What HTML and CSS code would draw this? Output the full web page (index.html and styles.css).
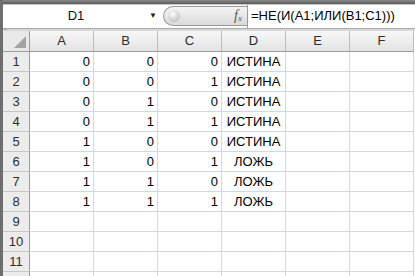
FILE: index.html
```html
<!DOCTYPE html>
<html>
  <head>
    <meta charset="UTF-8">
    <title>Excel</title>
    <link rel="stylesheet" href="styles.css">
  </head>
  <body>
    <div class="window">
      <div class="topstrip"></div>

      <div class="formulabar">
        <div class="namebox">D1</div>
        <div class="dropdown">&#9660;</div>
        <div class="pill">
          <span class="knob"></span>
          <span class="fx">f<sub>x</sub></span>
        </div>
        <div class="formula">=НЕ(И(А1;ИЛИ(В1;С1)))</div>
      </div>

      <div class="divider"><span class="mark"></span></div>

      <div class="sheet">
        <div class="corner"><span class="tri"></span></div>
        <div class="colhead">A</div>
        <div class="colhead">B</div>
        <div class="colhead">C</div>
        <div class="colhead">D</div>
        <div class="colhead">E</div>
        <div class="colhead">F</div>

        <div class="rowhead">1</div><div class="cell num">0</div><div class="cell num">0</div><div class="cell num">0</div><div class="cell bool">ИСТИНА</div><div class="cell"></div><div class="cell"></div>
        <div class="rowhead">2</div><div class="cell num">0</div><div class="cell num">0</div><div class="cell num">1</div><div class="cell bool">ИСТИНА</div><div class="cell"></div><div class="cell"></div>
        <div class="rowhead">3</div><div class="cell num">0</div><div class="cell num">1</div><div class="cell num">0</div><div class="cell bool">ИСТИНА</div><div class="cell"></div><div class="cell"></div>
        <div class="rowhead">4</div><div class="cell num">0</div><div class="cell num">1</div><div class="cell num">1</div><div class="cell bool">ИСТИНА</div><div class="cell"></div><div class="cell"></div>
        <div class="rowhead">5</div><div class="cell num">1</div><div class="cell num">0</div><div class="cell num">0</div><div class="cell bool">ИСТИНА</div><div class="cell"></div><div class="cell"></div>
        <div class="rowhead">6</div><div class="cell num">1</div><div class="cell num">0</div><div class="cell num">1</div><div class="cell bool">ЛОЖЬ</div><div class="cell"></div><div class="cell"></div>
        <div class="rowhead">7</div><div class="cell num">1</div><div class="cell num">1</div><div class="cell num">0</div><div class="cell bool">ЛОЖЬ</div><div class="cell"></div><div class="cell"></div>
        <div class="rowhead">8</div><div class="cell num">1</div><div class="cell num">1</div><div class="cell num">1</div><div class="cell bool">ЛОЖЬ</div><div class="cell"></div><div class="cell"></div>
        <div class="rowhead">9</div><div class="cell"></div><div class="cell"></div><div class="cell"></div><div class="cell"></div><div class="cell"></div><div class="cell"></div>
        <div class="rowhead">10</div><div class="cell"></div><div class="cell"></div><div class="cell"></div><div class="cell"></div><div class="cell"></div><div class="cell"></div>
        <div class="rowhead">11</div><div class="cell"></div><div class="cell"></div><div class="cell"></div><div class="cell"></div><div class="cell"></div><div class="cell"></div>
        <div class="rowhead"></div><div class="cell"></div><div class="cell"></div><div class="cell"></div><div class="cell"></div><div class="cell"></div><div class="cell"></div>
      </div>
    </div>
  </body>
</html>
```

FILE: styles.css
```css
body {
  margin: 0;
  font-family: "Liberation Sans", Arial, sans-serif;
  font-size: 13px;
  color: #000;
  background-color: #fff;
  overflow: hidden;
}

.window {
  width: 415px;
  height: 276px;
  border-left: 3px solid #6e6e6e;
  box-sizing: border-box;
  overflow: hidden;
}

.topstrip {
  height: 4px;
  background: linear-gradient(#8a8a8a, #5a5a5a);
}

.formulabar {
  display: flex;
  height: 23px;
  background-color: #fff;
  border-top: 1px solid #c8c8c8;
  border-bottom: 1px solid #a9a9a9;
}

.namebox {
  width: 146px;
  text-align: center;
  line-height: 22px;
  color: #111;
}

.dropdown {
  width: 14px;
  font-size: 8px;
  line-height: 22px;
  color: #222;
}

.pill {
  position: relative;
  width: 84px;
  margin-top: 1px;
  height: 20px;
  border: 1px solid #9a9a9a;
  border-right: none;
  border-radius: 11px 0 0 11px;
  background: linear-gradient(#f4f4f4, #dadada);
  display: flex;
  align-items: center;
  justify-content: flex-end;
  box-sizing: border-box;
}

.knob {
  position: absolute;
  left: 4px;
  top: 3px;
  width: 12px;
  height: 12px;
  border-radius: 50%;
  background: radial-gradient(circle at 40% 35%, #fff, #c4c6ca 70%, #9ea2a8);
}

.fx {
  font-family: "Liberation Serif", serif;
  font-style: italic;
  font-size: 14px;
  color: #555;
  padding-right: 5px;
}

.fx sub {
  font-size: 9px;
  vertical-align: -1px;
}

.formula {
  flex: 1;
  border-left: 1px solid #9a9a9a;
  padding-left: 3px;
  line-height: 22px;
  white-space: nowrap;
}

.divider {
  height: 2px;
  background-color: #d8d8d8;
}

.mark {
  display: block;
  width: 3px;
  height: 1px;
  margin-left: 1px;
  background-color: #8fb3e0;
}

.sheet {
  display: grid;
  grid-template-columns: 27px repeat(6, 64px) 20px;
  grid-auto-rows: 20px;
  grid-template-rows: 21px;
}

.sheet > div {
  box-sizing: border-box;
}

.corner {
  grid-column: 1;
  position: relative;
  background: #e9e9e9;
  border-right: 1px solid #9c9c9c;
  border-bottom: 1px solid #9c9c9c;
}

.tri {
  position: absolute;
  right: 3px;
  bottom: 3px;
  width: 0;
  height: 0;
  border-left: 12px solid transparent;
  border-bottom: 12px solid #a4a4a4;
}

.colhead {
  background: linear-gradient(#f7f7f7, #e4e4e4);
  border-right: 1px solid #bdbdbd;
  border-bottom: 1px solid #9c9c9c;
  text-align: center;
  line-height: 20px;
  color: #2c2c2c;
}

.colhead:nth-child(7) {
  grid-column: 7;
}

.rowhead {
  grid-column: 1;
  background-color: #ececec;
  border-right: 1px solid #9c9c9c;
  border-bottom: 1px solid #c6c6c6;
  text-align: center;
  line-height: 19px;
  color: #2c2c2c;
}

.cell {
  border-right: 1px solid #d0d7e5;
  border-bottom: 1px solid #d0d7e5;
  line-height: 19px;
  padding: 0 3px;
  white-space: nowrap;
}

.num {
  text-align: right;
}

.bool {
  text-align: center;
}
```
